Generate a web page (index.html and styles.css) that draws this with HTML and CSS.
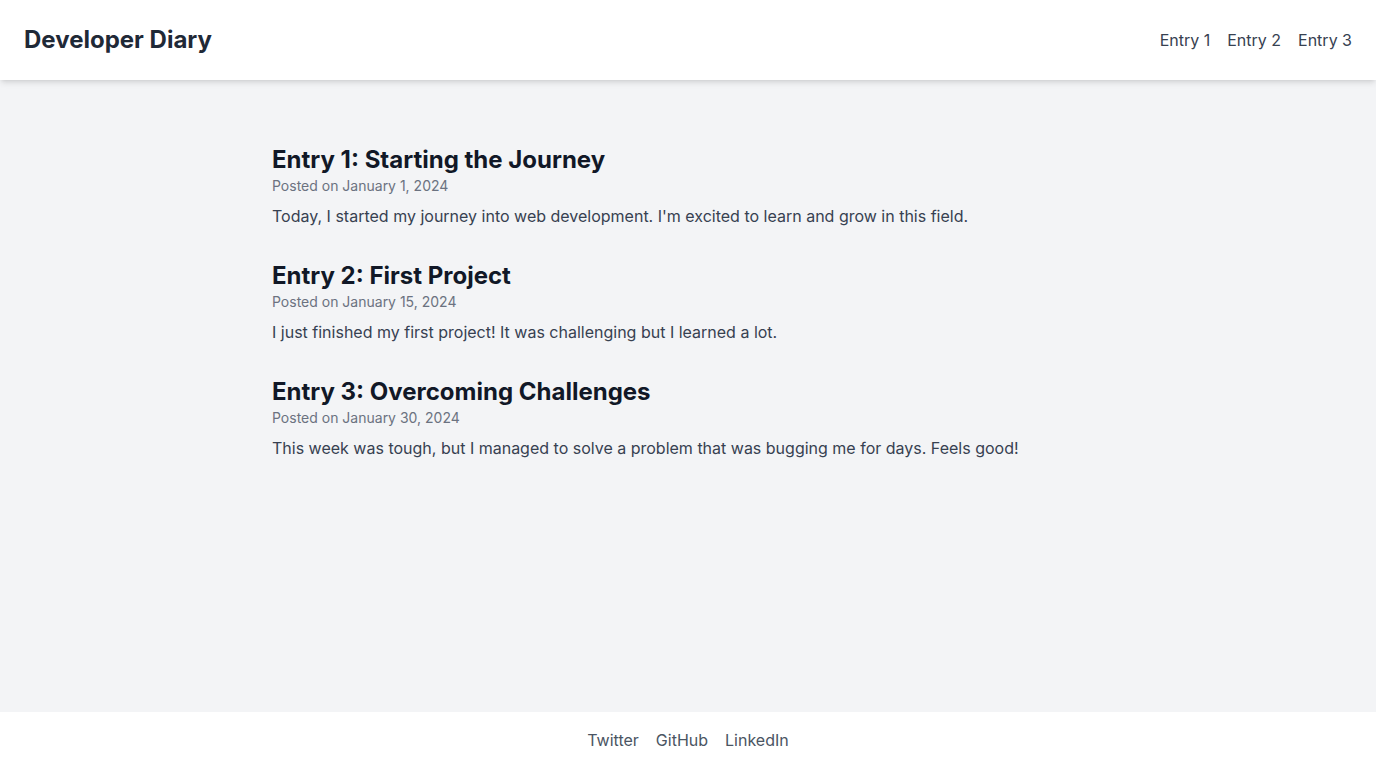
FILE: index.html
```html
<!DOCTYPE html>
<html lang="en">
<head>
<meta charset="utf-8">
<title>Developer Diary</title>
<link rel="stylesheet" href="styles.css">
</head>
<body>
<div class="page">
  <header class="site-header">
    <h1 class="brand">Developer Diary</h1>
    <nav class="nav">
      <a href="#entry1" class="nav-link">Entry 1</a>
      <a href="#entry2" class="nav-link">Entry 2</a>
      <a href="#entry3" class="nav-link">Entry 3</a>
    </nav>
  </header>
  <main class="main">
    <div class="container">
      <article class="entry" id="entry1">
        <h2 class="entry-title">Entry 1: Starting the Journey</h2>
        <p class="entry-date">Posted on January 1, 2024</p>
        <p class="entry-text">Today, I started my journey into web development. I'm excited to learn and grow in this field.</p>
      </article>
      <article class="entry" id="entry2">
        <h2 class="entry-title">Entry 2: First Project</h2>
        <p class="entry-date">Posted on January 15, 2024</p>
        <p class="entry-text">I just finished my first project! It was challenging but I learned a lot.</p>
      </article>
      <article class="entry" id="entry3">
        <h2 class="entry-title">Entry 3: Overcoming Challenges</h2>
        <p class="entry-date">Posted on January 30, 2024</p>
        <p class="entry-text">This week was tough, but I managed to solve a problem that was bugging me for days. Feels good!</p>
      </article>
    </div>
  </main>
  <footer class="site-footer">
    <a href="#" class="footer-link">Twitter</a>
    <a href="#" class="footer-link">GitHub</a>
    <a href="#" class="footer-link">LinkedIn</a>
  </footer>
</div>
</body>
</html>
```
FILE: styles.css
```css
* { box-sizing: border-box; }
html, body { margin: 0; padding: 0; }
body {
  font-family: Inter, "Noto Sans", "Liberation Sans", sans-serif;
  background: #f3f4f6;
  color: #374151;
  font-size: 16px;
  line-height: 24px;
}
a { text-decoration: none; }
.page {
  min-height: 100vh;
  display: flex;
  flex-direction: column;
}
.site-header {
  background: #ffffff;
  height: 80px;
  padding: 0 24px;
  display: flex;
  align-items: center;
  justify-content: space-between;
  box-shadow: 0 4px 6px -1px rgba(0,0,0,0.1), 0 2px 4px -2px rgba(0,0,0,0.1);
  position: relative;
  z-index: 1;
}
.brand {
  margin: 0;
  font-size: 24px;
  line-height: 32px;
  font-weight: 700;
  color: #1f2937;
}
.nav {
  display: flex;
  gap: 17px;
}
.nav-link {
  color: #374151;
  font-size: 16px;
  line-height: 24px;
}
.main {
  flex: 1;
  padding: 64px 32px 32px;
}
.container {
  max-width: 832px;
  margin: 0 auto;
}
.entry { margin-bottom: 32px; }
.entry-title {
  margin: 0;
  font-size: 24px;
  line-height: 32px;
  font-weight: 700;
  color: #111827;
}
.entry-date {
  margin: 0;
  font-size: 14px;
  line-height: 20px;
  color: #6b7280;
}
.entry-text {
  margin: 8px 0 0;
  color: #374151;
}
.site-footer {
  background: #ffffff;
  padding: 16px;
  display: flex;
  justify-content: center;
  gap: 17px;
}
.footer-link {
  color: #4b5563;
}
```
